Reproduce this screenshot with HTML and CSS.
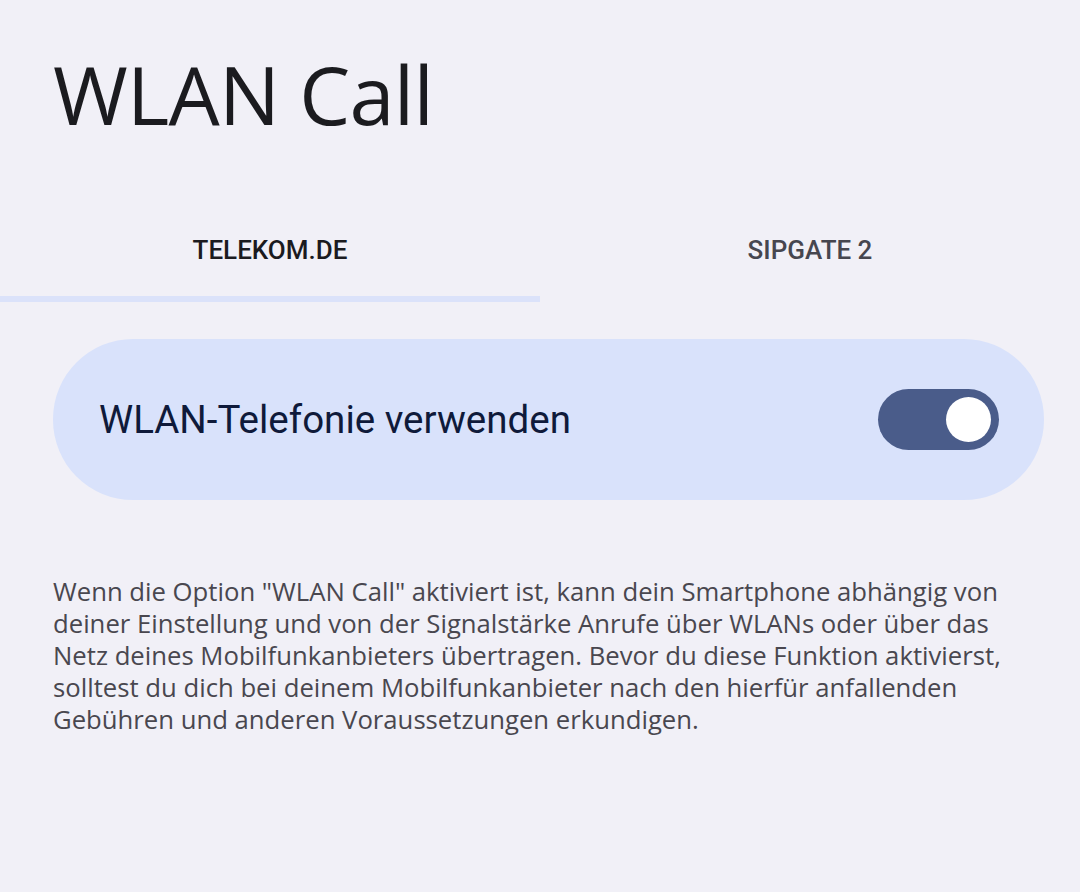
FILE: index.html
```html
<!DOCTYPE html>
<html lang="de">
<head>
    <meta charset="UTF-8">
    <meta name="viewport" content="width=device-width, initial-scale=1.0">
    <title>WLAN Call</title>
    <link rel="stylesheet" href="styles.css">
</head>
<body>
    <h1 class="page-title">WLAN Call</h1>

    <div class="tabs">
        <div class="tab active">TELEKOM.DE</div>
        <div class="tab">SIPGATE 2</div>
    </div>

    <div class="content">
        <div class="switch-card">
            <span class="switch-label">WLAN-Telefonie verwenden</span>
            <div class="toggle on"><div class="thumb"></div></div>
        </div>

        <p class="summary">Wenn die Option "WLAN Call" aktiviert ist, kann dein Smartphone abhängig von deiner Einstellung und von der Signalstärke Anrufe über WLANs oder über das Netz deines Mobilfunkanbieters übertragen. Bevor du diese Funktion aktivierst, solltest du dich bei deinem Mobilfunkanbieter nach den hierfür anfallenden Gebühren und anderen Voraussetzungen erkundigen.</p>
    </div>
</body>
</html>
```

FILE: styles.css
```css
* {
    margin: 0;
    padding: 0;
    box-sizing: border-box;
}

body {
    background-color: #f1f0f7;
    font-family: "Open Sans", Roboto, sans-serif;
    width: 1080px;
    height: 892px;
    overflow: hidden;
}

.page-title {
    font-family: "Open Sans", sans-serif;
    font-weight: 400;
    font-size: 81px;
    line-height: 96px;
    color: #1b1b1f;
    padding: 46px 0 0 53px;
    letter-spacing: -0.8px;
}

.tabs {
    display: flex;
    margin-top: 81px;
}

.tab {
    flex: 1;
    text-align: center;
    font-family: Roboto, sans-serif;
    font-weight: 500;
    font-size: 26px;
    color: #46464f;
    height: 79px;
    padding-top: 12px;
    border-bottom: 6px solid transparent;
}

.tab.active {
    color: #1b1b1f;
    border-bottom-color: #dbe2fa;
}

.content {
    padding: 37px 36px 0 53px;
}

.switch-card {
    display: flex;
    align-items: center;
    justify-content: space-between;
    height: 161px;
    background: #d9e2fb;
    border-radius: 80px;
    padding: 0 45px 0 46px;
}

.switch-label {
    font-family: Roboto, sans-serif;
    font-size: 38.5px;
    color: #0f1a3a;
}

.toggle {
    width: 121px;
    height: 61px;
    border-radius: 31px;
    background: #4a5c8a;
    display: flex;
    align-items: center;
    justify-content: flex-end;
    padding-right: 8px;
}

.thumb {
    width: 45px;
    height: 45px;
    border-radius: 50%;
    background: #ffffff;
}

.summary {
    margin-top: 76px;
    font-family: "Open Sans", sans-serif;
    font-size: 25.7px;
    line-height: 32px;
    color: #49474f;
    width: 972px;
}
```
